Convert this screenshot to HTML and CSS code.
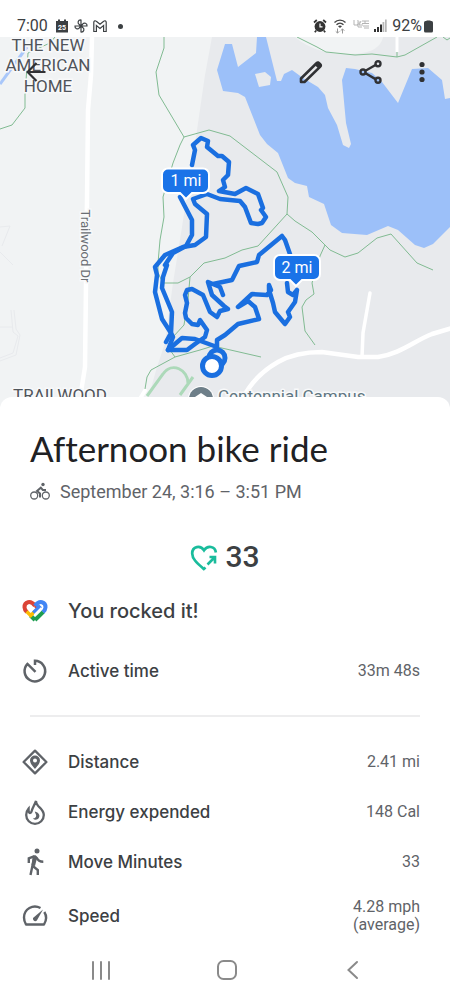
FILE: index.html
```html
<!DOCTYPE html>
<html lang="en">
<head>
<meta charset="utf-8">
<meta name="viewport" content="width=device-width, initial-scale=1">
<title>Afternoon bike ride</title>
<link rel="stylesheet" href="styles.css">
</head>
<body>
<div class="screen">
  <header class="status">
    <div class="status-group">
      <span class="clock">7:00</span>
      <svg class="st-icon first-icon" viewBox="0 0 14 14" aria-hidden="true"><path fill="#3c4043" d="M1 2h2V0.500h2V2h4V.5h2V2h2v11.500H1z"/><text x="7" y="10.500" font-size="7" font-weight="700" fill="#fff" text-anchor="middle">25</text></svg>
      <svg class="st-icon" viewBox="0 0 14 14" fill="none" stroke="#3c4043" stroke-width="1.200" aria-hidden="true"><path d="M7 7V1C4 .6 3.300 4 5 5.200M7 7h6c.4-3-3-3.700-4.200-2M7 7v6c3 .4 3.700-3 2-4.200M7 7H1c-.4 3 3 3.700 4.200 2M5 5.200 7 7M8.800 5 7 7M9 8.800 7 7M5.200 9 7 7"/></svg>
      <svg class="st-icon" viewBox="0 0 14 14" fill="none" stroke="#3c4043" stroke-width="1.200" aria-hidden="true"><path d="M.8 12.500V3.200C.8 1.500 2.500 1.500 3.300 2.200L7 5.200l3.700-3c.8-.7 2.500-.7 2.500 1v9.300h-2.600V6.600L7 9.500 3.400 6.600v5.900z"/></svg>
      <span class="dot"></span>
    </div>
    <div class="status-group status-right">
      <div class="radios">
        <svg class="st-icon" viewBox="0 0 14 14" aria-hidden="true"><circle cx="7" cy="7.500" r="5.400" fill="#333"/><path d="M7 4.500v3.300h2.500" fill="none" stroke="#fff" stroke-width="1.200"/><path d="M1 3.500 3.800 1M13 3.500 10.200 1M3.200 11.500 1.800 13.300M10.800 11.500l1.400 1.800" stroke="#333" stroke-width="1.700"/></svg>
        <svg class="wifi" viewBox="0 0 14 16" fill="none" aria-hidden="true"><path d="M1.500 4.500C4.500 1.300 9.500 1.300 12.500 4.500M3.500 6.700c2-2 5-2 7 0" stroke="#444" stroke-width="1.300"/><path d="M5 8.300c1-1.200 3-1.200 4 0L7 10z" fill="#444"/><path d="M4.500 10.500v4.500M2.700 13.300l1.800 1.800 1.800-1.800M9.500 15.500V11M7.700 12.700l1.800-1.800 1.800 1.800" stroke="#999" stroke-width="1"/></svg>
        <svg class="lte" viewBox="0 0 18 14" fill="none" stroke="#b4b4b4" stroke-width="1" aria-hidden="true"><path d="M1 1v5h4M4 2c3-1 3 3 0 4M5 3v5h4M8 2 6 6h4M9 2h7M9 4.500h7M10 7h6M11 9h5M12 2v3"/></svg>
      </div>
      <svg class="st-icon" viewBox="0 0 14 14" aria-hidden="true"><path fill="#333" d="M1 10h2v3H1zM4 8h2v5H4zM7 5.500h2V13H7z"/><path fill="#b8b8b8" d="M9.500 3h1.800v10H9.500zM12 .5h1.700V13H12z"/></svg>
      <span class="clock charge">92%</span>
      <svg class="battery" viewBox="0 0 9 14" aria-hidden="true"><path fill="#999" d="M2.500 1h4v2h-4z"/><rect y="2" width="9" height="11.500" rx="1.500" fill="#3c4043"/></svg>
    </div>
  </header>

  <main>
    <section class="map" aria-label="Route map">
      <svg class="map-art" viewBox="0 37 450 376" preserveAspectRatio="xMidYMin slice">
        <rect y="37" width="450" height="376" fill="#f1f3f4"/>
        <path fill="#e8eaed" d="M212 37 205 75 197 130 182 227 173 283 165 343 157 367 144 413H450V37z"/>
        <path fill="#f1f3f4" d="M295 37c6 6 22 14 36 16 20 2 48 3 52-16z"/>
        <path fill="#9cc0f9" d="M217 70 223 91 238 93 245 97 260 135 267 144 278 153 288 178 295 183 307 186 309 197 324 204 331 225 342 233 367 235 388 226 398 230 415 245 424 248 433 244 450 227V98L445 99 442 80 428 68 412 69 398 103 382 82 372 73 355 69 346 68 342 80 346 123 351 144 349 148 343 145 337 125 328 108 325 95 318 87 303 78 292 70 284 74 281 81H277L266 37H257L256 53 238 67 232 44 225 44z"/>
        <path fill="#e8eaed" d="M255 74 265 72 271 77 270 85 259 87z"/>
        <path d="M0 84 27 47" stroke="#a9c7fa" stroke-width="3"/>
        <g fill="none" stroke="#e8eaed" stroke-width="1">
          <path d="M0 227 10 226 2 246M0 252 13 265M11 310 13 332 18 336 13 353 0 358M14 310 16 329 20 335 16 355 0 361M0 327 13 327"/>
        </g>
        <g fill="none" stroke="#fff">
          <path d="M92 37 91 75 88 110 87 200 86 283 85 367 81 392" stroke-width="4.500"/>
          <path d="M243 398C252 380 264 370 278 362 292 354 306 352 322 352L358 357H378C400 354 414 341 432 334L452 328" stroke-width="4.500"/>
          <path d="M370 293 363 333 362 357" stroke-width="3.500" stroke-linecap="round"/>
          <path d="M397 37V52" stroke-width="3"/>
          <path d="M138 402 146 389" stroke-width="4"/>
        </g>
        <g fill="none" stroke="#81bb92" stroke-width="1">
          <path d="M55 37 50 43 28 53 25 94V108L12 125 0 129"/>
          <path d="M164 37V48L156 72 159 95 184 137 209 130 230 136 277 172 288 197 287 214 258 246 242 250 225 258 204 263 190 277 178 283H163L158 273V263L160 240 164 217 163 197 173 163 180 145 184 137"/>
          <path d="M287 214 295 221 312 232 325 245 330 250 345 257 358 253 377 238 391 234 417 263 433 270M325 245 320 256 312 283 314 294 306 300 302 307 305 331 315 345"/>
          <path d="M297 37 317 47 326 52 355 55 372 54 397 57 405 55 437 37M443 37 447 40 450 38M397 52V57M190 277 188 300 184 325 173 337M145 389 147 377 151 370 175 357 200 350 213 346 261 357M170 350 175 357"/>
        </g>
        <path d="M147 396 163 374C172 361 188 370 188 383M193 377 180 395" fill="none" stroke="#acd9b9" stroke-width="3"/>
        <g fill="none" stroke="#1a6fe0" stroke-width="4.500" stroke-linejoin="round" stroke-linecap="round">
          <path d="M192 165 195 150 193 145 201 138 208 141 207 147 218 156H222L229 162 228 175 223 180 225 187 219 191 235 194 246 188 258 194 263 208 261 210 266 217 262 223 258 224 251 223 245 207 240 201 220 199 207 194 193 199 195 204 207 214 206 237 195 245 183 247 165 255 155 267 157 275 155 292 162 319 171 333 166 342"/>
          <path d="M180 197 192 220V235L186 246 173 253 165 265 167 265 163 277 162 288 172 312 171 333 173 337 168 350H187L195 344 205 337 207 330 200 320 198 325 192 324 186 318 185 313 187 303 185 295 187 290 192 289 203 295 210 312 217 317 220 311 228 309 224 306 212 295 208 282 220 287 223 295M213 284 232 280 239 266 257 262 259 255 282 236 285 240 291 257"/>
          <path d="M287 283 288 292 293 295 297 290 295 302 288 312 290 317 285 324 275 312 273 303 269 290V285L271 290 267 295 252 294 238 307 248 301 255 307 259 319 238 324 225 335 217 340V348M168 350 182 338 195 339 217 347"/>
          <circle cx="217" cy="358" r="8" stroke-width="5"/>
        </g>
        <circle cx="212" cy="366" r="9.500" fill="#fff" stroke="#1a6fe0" stroke-width="5"/>
        <g fill="#1a73e8" stroke="#fff" stroke-width="2">
          <path d="M168 168.500H203a6 6 0 0 1 6 6V187a6 6 0 0 1-6 6H192L186 199 180 193H168a6 6 0 0 1-6-6V174.500a6 6 0 0 1 6-6z"/>
          <path d="M280 255H314a6 6 0 0 1 6 6V274a6 6 0 0 1-6 6H302L296 286 290 280H280a6 6 0 0 1-6-6V261a6 6 0 0 1 6-6z"/>
        </g>
        <g class="pin-text"><text x="186" y="186">1 mi</text><text x="297" y="273">2 mi</text></g>
        <g class="place"><text x="48" y="51">THE NEW</text><text x="48" y="71">AMERICAN</text><text x="48" y="92">HOME</text><text x="60" y="401">TRAILWOOD</text></g>
        <text class="street" transform="translate(81 246) rotate(90)">Trailwood Dr</text>
        <circle cx="201" cy="399" r="13" fill="#fff"/><circle cx="201" cy="399" r="12" fill="#6e7f89"/><path d="M195 397 201 393 207 397z" fill="#fff"/>
        <text class="campus" x="218" y="402">Centennial Campus</text>
      </svg>
      <div class="map-bar">
        <button class="icon-btn" aria-label="Back"><svg viewBox="0 0 24 24" fill="none" stroke="#303134" stroke-width="2.200"><path d="M21.500 12H4M12.500 3 3.600 12l8.900 9"/></svg></button>
        <div class="map-actions">
          <button class="icon-btn" aria-label="Edit"><svg viewBox="0 0 24 24" fill="none" stroke="#303134" stroke-width="2.600" stroke-linejoin="round"><path d="M2 22v-3.500L17.500 3.300c1-1 1.800-1 2.800 0l.7.700c1 1 1 1.800 0 2.800L5.500 22z"/><path d="M17.500 3.300 21.500 7" stroke-width="5"/></svg></button>
          <button class="icon-btn" aria-label="Share"><svg viewBox="0 0 24 24" fill="none" stroke="#303134" stroke-width="2.400"><path d="M6.500 10.700 16.500 5M6.500 13.300l10 5.800"/><circle cx="4" cy="12" r="2.500"/><circle cx="19" cy="3.700" r="2.500"/><circle cx="19" cy="20.300" r="2.500"/></svg></button>
          <button class="icon-btn more" aria-label="More options"><svg viewBox="0 0 24 24" fill="#303134"><circle cx="12" cy="4.500" r="2.600"/><circle cx="12" cy="12" r="2.600"/><circle cx="12" cy="19.500" r="2.600"/></svg></button>
        </div>
      </div>
    </section>

    <section class="sheet">
      <h1>Afternoon bike ride</h1>
      <p class="when">
        <svg viewBox="0 0 20 20" fill="none" stroke="#5f6368" stroke-width="1.300" aria-hidden="true"><circle cx="4.200" cy="13.500" r="3.500"/><circle cx="15.800" cy="13.500" r="3.500"/><circle cx="13" cy="2.500" r="1.700" fill="#5f6368" stroke="none"/><path d="M10 15.500V11.500L7 9l3.800-3.300 2 2.300h3.200" stroke-width="2"/></svg>
        <span>September 24, 3:16 – 3:51 PM</span>
      </p>
      <p class="score">
        <svg viewBox="0 0 28 28" fill="none" stroke="#1abc9c" stroke-width="2.700" aria-label="Heart Points"><path d="M15.500 24.500 13.800 26C7 20 2.200 16 2.200 10.500 2.200 3 10.500 2 14 7.300 17.500 2 25 3 25.900 9.500"/><path d="M17.500 21.500 24.500 14.500M19.500 14H25v6.500" stroke-width="2.600"/></svg>
        <span>33</span>
      </p>

      <div class="row praise">
        <svg class="row-icon" viewBox="0 0 26 26" fill="none" stroke-width="4" aria-hidden="true"><path d="M13 7.800C8.500 1.500 2.300 4 2.500 9.300c.1 1.900 1 3.300 2.400 4.700" stroke="#db4437"/><path d="M13 22 21.300 13.800" stroke="#1e9d50"/><path d="M8.500 17.500 13 22" stroke="#1e9d50"/><path d="M4.700 13.600 8.700 17.600 13.500 12.800" stroke="#fbbc04" stroke-width="3.500"/><path d="M13.200 7.500 16 10.500" stroke="#db4437" stroke-width="3.500"/><path d="m11.500 14.800 7-7M13 7.800C17.500 1.500 23.700 4 23.500 9.300c-.1 1.900-1 3.300-2.500 4.800" stroke="#4285f4"/><path d="m12.500 17 7-7" stroke="#fff" stroke-width="2"/></svg>
        <span class="label">You rocked it!</span>
      </div>

      <div class="row">
        <svg class="row-icon" viewBox="0 0 26 26" fill="none" stroke="#5f6368" stroke-width="2.500" aria-hidden="true"><path d="M13 7V2.800a10.300 10.300 0 1 1-7.500 3.100L13.500 13.800"/></svg>
        <span class="label">Active time</span><span class="value">33m 48s</span>
      </div>
      <hr>
      <div class="row">
        <svg class="row-icon" viewBox="0 0 26 26" aria-hidden="true"><path d="M13 1.600 24.400 13 13 24.400 1.600 13z" fill="none" stroke="#5f6368" stroke-width="2.300" stroke-linejoin="round"/><path fill="#5f6368" fill-rule="evenodd" d="M13 6.500a5 5 0 0 1 5 5c0 3.500-5 8.300-5 8.300s-5-4.800-5-8.300a5 5 0 0 1 5-5zm0 3a2 2 0 1 0 0 4 2 2 0 0 0 0-4z"/></svg>
        <span class="label">Distance</span><span class="value">2.41 mi</span>
      </div>
      <div class="row">
        <svg class="row-icon" viewBox="0 0 26 26" aria-hidden="true"><path fill="none" stroke="#5f6368" stroke-width="2.300" d="M14 2C12.500 6 10.500 9 9.500 12.500c-.3 1.700-2 2-2.600.5-.4-1-.3-2.200-.3-3.500C4.800 11.500 4.200 13.500 4.200 16a8.800 8.800 0 0 0 17.600 0c0-4.500-3-6.500-5.600-9C14.600 5.500 14 4 14 2z"/><path fill="#5f6368" d="M12.800 12.500c4 1 5.700 4 4 6.500-1.300 2-4 2.300-6 .5 2.500-.2 3.500-1.500 3.400-3-.1-1.500-1.200-2.500-1.400-4z"/></svg>
        <span class="label">Energy expended</span><span class="value">148 Cal</span>
      </div>
      <div class="row">
        <svg class="row-icon" viewBox="0 0 26 26" aria-hidden="true"><circle cx="15" cy="2" r="2.500" fill="#5f6368"/><path d="M6.800 14V9.300L12 7.300M12.500 7 8.500 26M10.800 17l5 4v5M14.500 8.500c1.200 2.800 3.300 4.300 6.800 4.300" fill="none" stroke="#5f6368" stroke-width="2.400"/><path fill="#5f6368" d="M11 6.500c2-.8 3.300-.3 4.300 1.500l-2.300 9-3.500-1z"/></svg>
        <span class="label">Move Minutes</span><span class="value">33</span>
      </div>
      <div class="row row-tall">
        <svg class="row-icon" viewBox="0 0 26 26" aria-hidden="true"><path fill="none" stroke="#5f6368" stroke-width="2.400" stroke-linejoin="round" d="M18.500 5C11 .8 2 6 2 14.500c0 2.700.8 5 2 7h18c2.600-4.300 2.600-9 .3-12.500"/><path fill="#5f6368" d="M21 6.500 15 17.300c-1.200 1.800-4.700.6-4-2.300z"/></svg>
        <span class="label">Speed</span><span class="value">4.28 mph<br>(average)</span>
      </div>
    </section>
  </main>

  <nav class="nav" aria-label="System">
    <button aria-label="Recent apps"><svg viewBox="0 0 22 22" fill="none" stroke="#8a8a8a" stroke-width="2" stroke-linecap="round"><path d="M3 3v17M11 3v17M19 3v17"/></svg></button>
    <button aria-label="Home"><svg viewBox="0 0 22 22" fill="none" stroke="#8a8a8a" stroke-width="2"><rect x="2" y="2" width="18" height="18" rx="5.500"/></svg></button>
    <button aria-label="Back"><svg viewBox="0 0 22 22" fill="none" stroke="#8a8a8a" stroke-width="2" stroke-linecap="round"><path d="M15 3 6.500 11l8.500 8"/></svg></button>
  </nav>
</div>
</body>
</html>
```
FILE: styles.css
```css
* { box-sizing: border-box; }
body { margin: 0; background: #fff; color: #3c4043; font-family: Roboto, "Liberation Sans", sans-serif; }
h1, p { margin: 0; }
button { padding: 0; border: 0; background: none; cursor: pointer; }
svg { display: block; flex: none; }

.screen { min-height: 100vh; display: flex; flex-direction: column; }

.status { display: flex; justify-content: space-between; align-items: flex-end; padding: 14px 17px 0; height: 37px; }
.status-group { display: flex; align-items: center; gap: 5px; height: 22px; }
.status-right { gap: 2px; }
.radios { display: flex; align-items: center; gap: 6px; }
.clock { font-size: 16px; line-height: 22px; }
.charge { margin-left: 3px; }
.st-icon { width: 14px; height: 14px; }
.first-icon { margin-left: 2px; }
.wifi { width: 14px; height: 16px; }
.lte { width: 18px; height: 16px; }
.battery { width: 9px; height: 14px; }
.dot { width: 5px; height: 5px; margin-left: 6px; border-radius: 50%; background: #3c4043; }

.map { position: relative; overflow: hidden; }
.map-art { width: 100%; height: 376px; }
.map-bar { position: absolute; top: 15px; left: 16px; right: 17px; display: flex; justify-content: space-between; }
.map-actions { display: flex; gap: 20px; }
.icon-btn { display: grid; place-items: center; width: 40px; height: 40px; }
.icon-btn.more { width: 22px; place-content: center; }
.icon-btn svg { width: 24px; height: 24px; }
.pin-text { font-size: 16px; fill: #fff; text-anchor: middle; }
.place { font-size: 17px; fill: #50545a; text-anchor: middle; stroke: #f8f9fa; stroke-width: 3px; paint-order: stroke; }
.street { font-size: 13px; fill: #6b6f74; text-anchor: middle; stroke: #f8f9fa; stroke-width: 3px; paint-order: stroke; }
.campus { font-size: 17px; fill: #607681; stroke: #f8f9fa; stroke-width: 3px; paint-order: stroke; }

.sheet { position: relative; margin-top: -16px; padding: 29px 30px 0; background: #fff; border-radius: 12px 12px 0 0; }
h1 { font: 400 35px/44px Lato, sans-serif; font-variant-ligatures: none; color: #202124; }
.when { display: flex; align-items: center; gap: 10px; margin-top: 10px; font-size: 18px; line-height: 24px; color: #5f6368; }
.when svg { width: 20px; height: 20px; }
.score { display: flex; justify-content: center; align-items: center; gap: 7px; margin: 35px 0 11px; font-size: 30px; font-weight: 500; line-height: 36px; }
.score svg { width: 28px; height: 28px; }

.row { display: flex; align-items: center; min-height: 50px; margin-left: -8px; }
.row-tall { min-height: 58px; }
.row-icon { width: 26px; height: 26px; margin-right: 20px; overflow: visible; }
.label { flex: 1; font: 500 17px/24px Inter, sans-serif; }
.praise { margin-bottom: 10px; }
.praise .label { font-size: 20px; }
.value { font-size: 16px; line-height: 18px; text-align: right; color: #5f6368; }
hr { margin: 19px 0 20px; border: 0; border-top: 2px solid #ededee; }

.nav { display: flex; justify-content: space-between; padding: 0 86px 0 90px; height: 50px; }
.nav button { display: grid; place-items: center; width: 22px; }
.nav svg { width: 22px; height: 22px; }
```
